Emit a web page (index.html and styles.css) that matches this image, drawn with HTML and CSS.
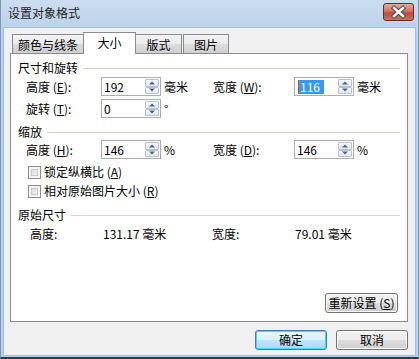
FILE: index.html
```html
<!DOCTYPE html>
<html lang="zh-CN">
<head>
<meta charset="utf-8">
<title>设置对象格式</title>
<link rel="stylesheet" href="styles.css">
</head>
<body>
<div class="window">
  <div class="titlebar">
    <span class="title">设置对象格式</span>
    <div class="close">
      <svg width="31" height="18" viewBox="0 0 31 18">
        <path d="M11 5 L20 13 M20 5 L11 13" stroke="#4a4a4a" stroke-width="4.4" stroke-linecap="square"/>
        <path d="M11 5 L20 13 M20 5 L11 13" stroke="#ffffff" stroke-width="2.4" stroke-linecap="square"/>
      </svg>
    </div>
  </div>
  <div class="client">
    <div class="tabs">
      <div class="tab t1">颜色与线条</div>
      <div class="tab sel">大小</div>
      <div class="tab t3">版式</div>
      <div class="tab t4">图片</div>
    </div>
    <div class="panel">
      <div class="group-head"><span>尺寸和旋转</span><i class="rule"></i></div>
      <div class="row r1">
        <span class="lbl">高度 (<u>E</u>):</span>
        <div class="spin"><span class="val">192</span><div class="arrows"><b class="up"></b><b class="dn"></b></div></div>
        <span class="unit">毫米</span>
        <span class="lbl2">宽度 (<u>W</u>):</span>
        <div class="spin"><span class="val"><span class="hl">116</span></span><div class="arrows"><b class="up"></b><b class="dn"></b></div></div>
        <span class="unit">毫米</span>
      </div>
      <div class="row r2">
        <span class="lbl">旋转 (<u>T</u>):</span>
        <div class="spin"><span class="val">0</span><div class="arrows"><b class="up"></b><b class="dn"></b></div></div>
        <span class="unit">°</span>
      </div>
      <div class="group-head g2"><span>缩放</span><i class="rule"></i></div>
      <div class="row r3">
        <span class="lbl">高度 (<u>H</u>):</span>
        <div class="spin"><span class="val">146</span><div class="arrows"><b class="up"></b><b class="dn"></b></div></div>
        <span class="unit">%</span>
        <span class="lbl2">宽度 (<u>D</u>):</span>
        <div class="spin"><span class="val">146</span><div class="arrows"><b class="up"></b><b class="dn"></b></div></div>
        <span class="unit">%</span>
      </div>
      <label class="check c1"><span class="box"></span>锁定纵横比 (<u>A</u>)</label>
      <label class="check c2"><span class="box"></span>相对原始图片大小 (<u>R</u>)</label>
      <div class="group-head g3"><span>原始尺寸</span><i class="rule"></i></div>
      <div class="orig">
        <span class="olbl">高度:</span>
        <span class="oval">131.17 毫米</span>
        <span class="olbl2">宽度:</span>
        <span class="oval2">79.01 毫米</span>
      </div>
      <div class="reset-row"><button class="btn reset">重新设置 (<u>S</u>)</button></div>
    </div>
    <div class="footer">
      <button class="btn ok">确定</button>
      <button class="btn cancel">取消</button>
    </div>
  </div>
</div>
</body>
</html>
```
FILE: styles.css
```css
html, body { margin: 0; padding: 0; }
body {
  width: 419px; height: 359px; overflow: hidden;
  font-family: "Noto Sans CJK SC", "Noto Sans", sans-serif;
  font-size: 12px; color: #000; background: #fff;
}
.window {
  width: 419px; height: 359px; box-sizing: border-box;
  display: flex; flex-direction: column;
  background: linear-gradient(#c6daef, #b8d0ea 40px);
  border-left: 1px solid #7f97b3;
  border-right: 1px solid #7f97b3;
  border-bottom: 2px solid #2b3b4e;
}
.titlebar {
  height: 27px; flex: none; box-sizing: border-box;
  display: flex; align-items: center; justify-content: space-between;
  padding: 0 4px 1px 7px;
  background: linear-gradient(#cadcf0, #bcd3eb);
}
.title { font-size: 12px; color: #1e1e1e; line-height: 16px; }
.close {
  width: 31px; height: 18px; box-sizing: border-box;
  border: 1px solid #6b2b25; border-radius: 3px;
  background: linear-gradient(#e9a99b, #d8705f 45%, #c14a3b 55%, #cf6e5c);
  display: flex; align-items: center; justify-content: center;
  margin-top: -3px;
}
.close svg { display: block; margin: -1px; }
.client {
  flex: 1; margin: 0 2px 1px 2px;
  background: #f0f0f0;
  border: 1px solid #a5bdd8;
  border-bottom-color: #9fc0e0;
  display: flex; flex-direction: column;
  padding: 4px 7px 0 6px;
}
.tabs { display: flex; align-items: flex-end; height: 21px; padding-left: 2px; position: relative; z-index: 1; }
.tab {
  box-sizing: border-box; height: 19px; flex: none;
  border: 1px solid #898c95; border-bottom: none;
  background: linear-gradient(#f3f3f3, #ebebeb 50%, #dddddd 51%, #cfcfcf);
  display: flex; align-items: center; justify-content: center;
  line-height: 16px; padding-top: 1px;
}
.t1 { width: 71px; border-right: none; }
.sel { width: 53px; height: 22px; background: #fff; margin-bottom: -1px; padding-bottom: 2px; }
.t3 { width: 46px; border-left: none; }
.t4 { width: 46px; margin-left: 1px; }
.panel {
  box-sizing: border-box; width: 398px; height: 269px; flex: none;
  background: #fff; border: 1px solid #898c95;
  display: flex; flex-direction: column;
  padding: 6px 7px 8px 7px;
}
.group-head { display: flex; align-items: center; height: 16px; line-height: 16px; }
.group-head .rule { flex: 1; height: 1px; background: #d4d4c8; margin-left: 5px; margin-top: 1px; }
.g2 { margin-top: 6px; }
.g3 { margin-top: 8px; }
.row { display: flex; align-items: center; height: 19px; padding-left: 8px; }
.row > * { flex: none; }
.r1 { margin-top: 1px; }
.r2 { margin-top: 3px; }
.r3 { margin-top: 0px; }
.lbl { width: 75px; }
.lbl2 { width: 81px; }
.unit { width: 49px; padding-left: 3px; }
.spin {
  box-sizing: border-box; width: 60px; height: 19px;
  border: 1px solid #abadb3;
  display: flex; align-items: stretch; background: #fff;
}
.val { flex: 1; padding-left: 2px; line-height: 17px; display: flex; align-items: center; }
.hl { background: #3399ff; color: #fff; line-height: 14px; padding: 0 4px 0 1px; border-left: 1px solid #c05a00; margin-left: 1px; }
.arrows { width: 15px; display: flex; flex-direction: column; padding: 1px 1px 1px 0; box-sizing: border-box; }
.arrows b {
  flex: 1; position: relative; box-sizing: border-box;
  border: 1px solid #b6c2d2; border-radius: 1px;
  background: linear-gradient(#f6f8fb, #dfe6ef);
}
.arrows b::after {
  content: ""; position: absolute; left: 50%; top: 50%;
  border-left: 3px solid transparent; border-right: 3px solid transparent;
  transform: translate(-50%, -50%);
}
.arrows .up::after { border-bottom: 3px solid #4d6185; }
.arrows .dn::after { border-top: 3px solid #4d6185; }
.check { display: flex; align-items: center; height: 16px; line-height: 16px; padding-left: 10px; }
.c1 { margin-top: 5px; }
.c2 { margin-top: 3px; }
.box {
  width: 13px; height: 13px; box-sizing: border-box; margin-right: 3px; flex: none;
  border: 1px solid #8f8f8f;
  background: linear-gradient(135deg, #dcdcdc, #f4f4f4);
  box-shadow: inset 0 0 0 2px #f4f4f4, inset 0 0 0 3px #c8c8c8;
}
.orig { display: flex; align-items: center; height: 16px; line-height: 16px; padding-left: 12px; margin-top: 3px; }
.orig > * { flex: none; }
.olbl { width: 73px; }
.oval { width: 109px; }
.olbl2 { width: 83px; }
.reset-row { margin-top: auto; display: flex; justify-content: flex-end; padding-right: 2px; }
.btn {
  font-family: inherit; font-size: 12px; color: #000;
  box-sizing: border-box; height: 20px; padding: 0;
  border: 1px solid #707070; border-radius: 3px;
  background: linear-gradient(#f2f2f2, #ebebeb 50%, #dddddd 51%, #cfcfcf);
  box-shadow: inset 0 0 0 1px #fcfcfc;
  line-height: 16px;
}
.reset { width: 73px; height: 20px; }
.footer { display: flex; justify-content: flex-end; gap: 9px; padding-top: 8px; }
.ok, .cancel { width: 72px; height: 20px; }
.ok {
  border-color: #3c7fb1;
  background: linear-gradient(#eaf6fd, #d9f0fc 50%, #bee6fd 51%, #a7d9f5);
  box-shadow: inset 0 0 0 1px #48d3f9;
}
u { text-decoration: underline; text-underline-offset: 1px; }
```
